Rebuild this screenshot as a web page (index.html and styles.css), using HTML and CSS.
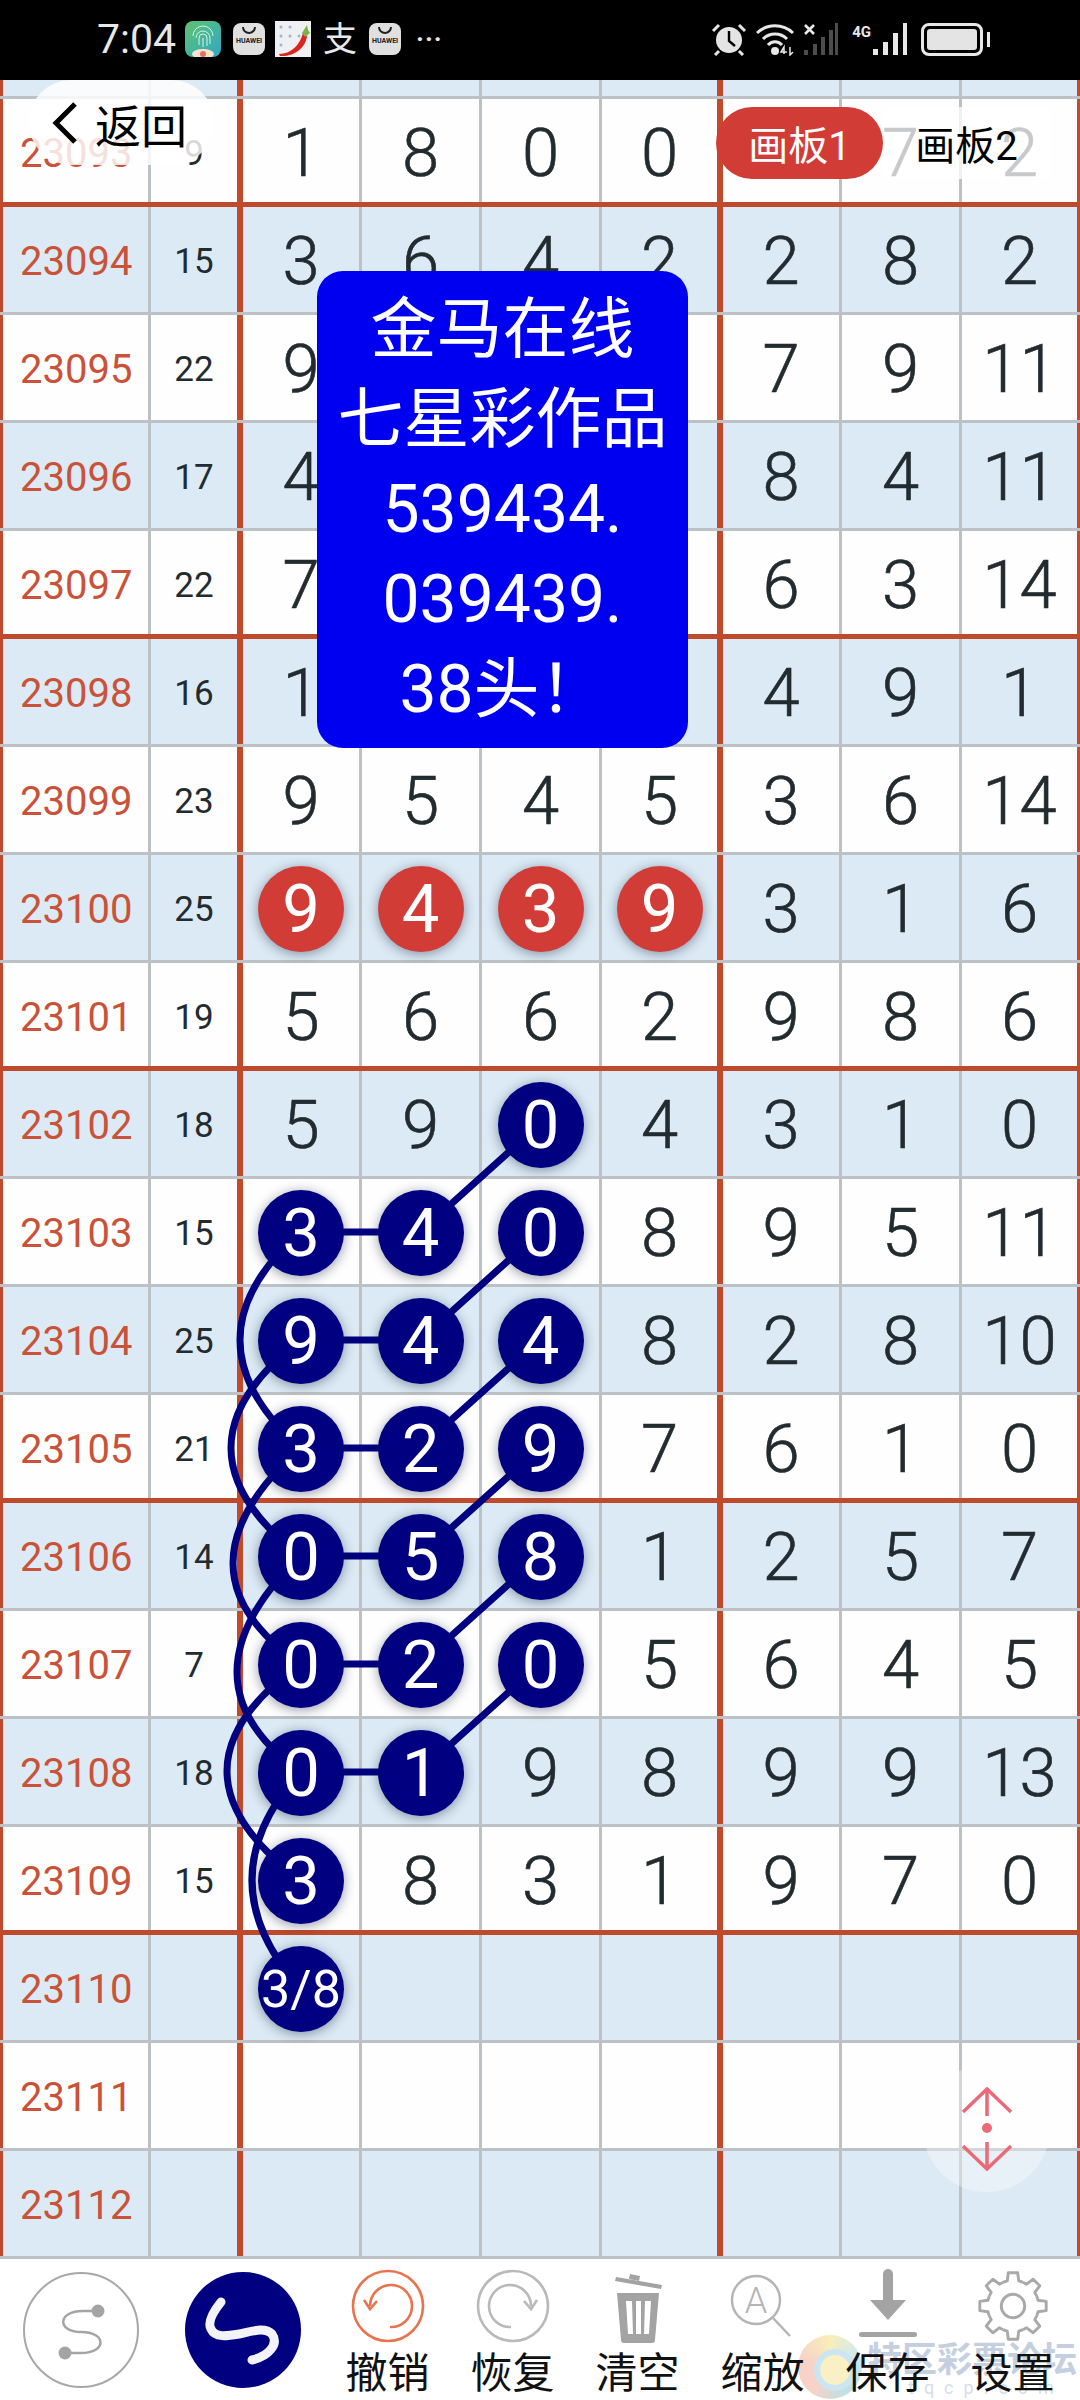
FILE: index.html
```html
<!DOCTYPE html>
<html lang="zh-CN">
<head>
    <meta charset="UTF-8">
    <meta name="viewport" content="width=device-width, initial-scale=1.0">
    <title>七星彩</title>
    <link rel="stylesheet" href="styles.css">
</head>
<body>
    <div class="status">
        <span class="time">7:04</span>
        <span class="app app-finger">
            <svg viewBox="0 0 36 36" width="36" height="36"><g fill="none" stroke="#d9f3e6" stroke-width="1"><path d="M11 17a7 7 0 0 1 14 0v6"/><path d="M14 24v-7a4 4 0 0 1 8 0v8"/><path d="M18 17v9"/><path d="M8 15a10 10 0 0 1 20 0"/></g><ellipse cx="18" cy="33" rx="11" ry="5" fill="#f6e2cf"/><circle cx="18" cy="33" r="3" fill="#e8705a"/></svg>
        </span>
        <span class="app app-huawei"><i class="smile"></i><b>HUAWEI</b></span>
        <span class="app app-chili">
            <svg viewBox="0 0 36 36" width="36" height="36"><rect width="36" height="36" fill="#eef0f4"/><g fill="#9fb2d0"><circle cx="6" cy="6" r="1.5"/><circle cx="15" cy="6" r="1.5"/><circle cx="6" cy="15" r="1.5"/><circle cx="15" cy="15" r="1.5"/><circle cx="24" cy="15" r="1.5"/><circle cx="6" cy="24" r="1.5"/></g><path d="M4 33C16 33 25 24 28 12l4 3C31 26 20 36 5 35z" fill="#d8261c"/><path d="M27 12l5-8 1 5 2 3-5 4z" fill="#7cb342"/></svg>
        </span>
        <span class="app-text">支</span>
        <span class="app app-huawei"><i class="smile"></i><b>HUAWEI</b></span>
        <span class="more">···</span>
        <span class="status-right">
            <svg class="ic-alarm" viewBox="0 0 36 34" width="36" height="34"><circle cx="18" cy="18" r="13" fill="#e4e4e4"/><path d="M18 9v10l6 5" fill="none" stroke="#000" stroke-width="2.4"/><path d="M2 9l6-6M34 9l-6-6M8 29l-4 4M28 29l4 4" stroke="#e4e4e4" stroke-width="3"/></svg>
            <svg class="ic-wifi" viewBox="0 0 40 34" width="40" height="34"><g fill="none" stroke="#e8e8e8" stroke-width="3"><path d="M1 11a26 26 0 0 1 36 0"/><path d="M7 17a17 17 0 0 1 24 0"/><path d="M12 23a9 9 0 0 1 14 0"/></g><circle cx="19" cy="29" r="4" fill="#e8e8e8"/><path d="M28 32v-7l-3 5h6M34 25v8l3-3" fill="none" stroke="#e8e8e8" stroke-width="1.5"/></svg>
            <svg class="ic-sig" viewBox="0 0 36 34" width="36" height="34"><path d="M2 3l9 9M11 3l-9 9" stroke="#e8e8e8" stroke-width="2.6"/><g fill="#4d4d4d"><rect x="1" y="28" width="4" height="5"/><rect x="10" y="22" width="4" height="11"/><rect x="18" y="15" width="4" height="18"/><rect x="26" y="8" width="4" height="25"/><rect x="32" y="1" width="3" height="32"/></g></svg>
            <span class="sig-label">4G</span>
            <svg class="ic-sig2" viewBox="0 0 36 34" width="36" height="34"><g fill="#e8e8e8"><rect x="1" y="27" width="5" height="6"/><rect x="11" y="20" width="5" height="13"/><rect x="21" y="11" width="5" height="22"/><rect x="31" y="1" width="4" height="32"/></g></svg>
            <span class="battery"><i></i></span>
        </span>
    </div>

    <div class="board">
        <div class="row row-cut"><div class="cell cell-id"></div><div class="cell cell-sum"></div><div class="cell"></div><div class="cell"></div><div class="cell"></div><div class="cell cell-end"></div><div class="cell"></div><div class="cell"></div><div class="cell"></div></div>
        <div class="row major"><div class="cell cell-id">23093</div><div class="cell cell-sum">9</div><div class="cell">1</div><div class="cell">8</div><div class="cell">0</div><div class="cell cell-end">0</div><div class="cell"></div><div class="cell">7</div><div class="cell">2</div></div>
        <div class="row alt"><div class="cell cell-id">23094</div><div class="cell cell-sum">15</div><div class="cell">3</div><div class="cell">6</div><div class="cell">4</div><div class="cell cell-end">2</div><div class="cell">2</div><div class="cell">8</div><div class="cell">2</div></div>
        <div class="row"><div class="cell cell-id">23095</div><div class="cell cell-sum">22</div><div class="cell">9</div><div class="cell"></div><div class="cell"></div><div class="cell cell-end"></div><div class="cell">7</div><div class="cell">9</div><div class="cell">11</div></div>
        <div class="row alt"><div class="cell cell-id">23096</div><div class="cell cell-sum">17</div><div class="cell">4</div><div class="cell"></div><div class="cell"></div><div class="cell cell-end"></div><div class="cell">8</div><div class="cell">4</div><div class="cell">11</div></div>
        <div class="row major"><div class="cell cell-id">23097</div><div class="cell cell-sum">22</div><div class="cell">7</div><div class="cell"></div><div class="cell"></div><div class="cell cell-end"></div><div class="cell">6</div><div class="cell">3</div><div class="cell">14</div></div>
        <div class="row alt"><div class="cell cell-id">23098</div><div class="cell cell-sum">16</div><div class="cell">1</div><div class="cell"></div><div class="cell"></div><div class="cell cell-end"></div><div class="cell">4</div><div class="cell">9</div><div class="cell">1</div></div>
        <div class="row"><div class="cell cell-id">23099</div><div class="cell cell-sum">23</div><div class="cell">9</div><div class="cell">5</div><div class="cell">4</div><div class="cell cell-end">5</div><div class="cell">3</div><div class="cell">6</div><div class="cell">14</div></div>
        <div class="row alt"><div class="cell cell-id">23100</div><div class="cell cell-sum">25</div><div class="cell"><span class="dot dot-red">9</span></div><div class="cell"><span class="dot dot-red">4</span></div><div class="cell"><span class="dot dot-red">3</span></div><div class="cell cell-end"><span class="dot dot-red">9</span></div><div class="cell">3</div><div class="cell">1</div><div class="cell">6</div></div>
        <div class="row major"><div class="cell cell-id">23101</div><div class="cell cell-sum">19</div><div class="cell">5</div><div class="cell">6</div><div class="cell">6</div><div class="cell cell-end">2</div><div class="cell">9</div><div class="cell">8</div><div class="cell">6</div></div>
        <div class="row alt"><div class="cell cell-id">23102</div><div class="cell cell-sum">18</div><div class="cell">5</div><div class="cell">9</div><div class="cell"><span class="dot">0</span></div><div class="cell cell-end">4</div><div class="cell">3</div><div class="cell">1</div><div class="cell">0</div></div>
        <div class="row"><div class="cell cell-id">23103</div><div class="cell cell-sum">15</div><div class="cell"><span class="dot">3</span></div><div class="cell"><span class="dot">4</span></div><div class="cell"><span class="dot">0</span></div><div class="cell cell-end">8</div><div class="cell">9</div><div class="cell">5</div><div class="cell">11</div></div>
        <div class="row alt"><div class="cell cell-id">23104</div><div class="cell cell-sum">25</div><div class="cell"><span class="dot">9</span></div><div class="cell"><span class="dot">4</span></div><div class="cell"><span class="dot">4</span></div><div class="cell cell-end">8</div><div class="cell">2</div><div class="cell">8</div><div class="cell">10</div></div>
        <div class="row major"><div class="cell cell-id">23105</div><div class="cell cell-sum">21</div><div class="cell"><span class="dot">3</span></div><div class="cell"><span class="dot">2</span></div><div class="cell"><span class="dot">9</span></div><div class="cell cell-end">7</div><div class="cell">6</div><div class="cell">1</div><div class="cell">0</div></div>
        <div class="row alt"><div class="cell cell-id">23106</div><div class="cell cell-sum">14</div><div class="cell"><span class="dot">0</span></div><div class="cell"><span class="dot">5</span></div><div class="cell"><span class="dot">8</span></div><div class="cell cell-end">1</div><div class="cell">2</div><div class="cell">5</div><div class="cell">7</div></div>
        <div class="row"><div class="cell cell-id">23107</div><div class="cell cell-sum">7</div><div class="cell"><span class="dot">0</span></div><div class="cell"><span class="dot">2</span></div><div class="cell"><span class="dot">0</span></div><div class="cell cell-end">5</div><div class="cell">6</div><div class="cell">4</div><div class="cell">5</div></div>
        <div class="row alt"><div class="cell cell-id">23108</div><div class="cell cell-sum">18</div><div class="cell"><span class="dot">0</span></div><div class="cell"><span class="dot">1</span></div><div class="cell">9</div><div class="cell cell-end">8</div><div class="cell">9</div><div class="cell">9</div><div class="cell">13</div></div>
        <div class="row major"><div class="cell cell-id">23109</div><div class="cell cell-sum">15</div><div class="cell"><span class="dot">3</span></div><div class="cell">8</div><div class="cell">3</div><div class="cell cell-end">1</div><div class="cell">9</div><div class="cell">7</div><div class="cell">0</div></div>
        <div class="row alt"><div class="cell cell-id">23110</div><div class="cell cell-sum"></div><div class="cell"><span class="dot dot-small">3/8</span></div><div class="cell"></div><div class="cell"></div><div class="cell cell-end"></div><div class="cell"></div><div class="cell"></div><div class="cell"></div></div>
        <div class="row"><div class="cell cell-id">23111</div><div class="cell cell-sum"></div><div class="cell"></div><div class="cell"></div><div class="cell"></div><div class="cell cell-end"></div><div class="cell"></div><div class="cell"></div><div class="cell"></div></div>
        <div class="row alt"><div class="cell cell-id">23112</div><div class="cell cell-sum"></div><div class="cell"></div><div class="cell"></div><div class="cell"></div><div class="cell cell-end"></div><div class="cell"></div><div class="cell"></div><div class="cell"></div></div>

        <!-- connecting strokes, in page coordinates -->
        <svg class="links" viewBox="0 80 1080 2179" width="1080" height="2179">
            <g fill="none" stroke="#000080" stroke-width="7">
                <path d="M540 1124L420 1232H300Q180 1340 300 1448H420L540 1340"/>
                <path d="M540 1232L420 1340H300Q162 1448 300 1556H420L540 1448"/>
                <path d="M300 1448Q166 1570 300 1664H420L540 1556"/>
                <path d="M300 1556Q174 1680 300 1772H420L540 1664"/>
                <path d="M300 1664Q154 1770 300 1880"/>
                <path d="M300 1772Q204 1880 300 1988"/>
            </g>
        </svg>

        <a class="back">
            <svg viewBox="0 0 26 42" width="26" height="42"><path d="M23 2L4 21l19 19" fill="none" stroke="#000" stroke-width="5"/></svg>
            返回
        </a>

        <div class="tabs">
            <span class="tab tab-on">画板1</span>
            <span class="tab">画板2</span>
        </div>

        <div class="note">
            <p>金马在线</p>
            <p>七星彩作品</p>
            <p>539434.</p>
            <p>039439.</p>
            <p>38头！</p>
        </div>

        <div class="scroller">
            <svg viewBox="0 0 52 84" width="52" height="84"><g fill="none" stroke="#ea6a78" stroke-width="3.5"><path d="M2 25L26 2l24 23M26 2v27"/><path d="M2 59l24 23 24-23M26 82V55"/></g><circle cx="26" cy="41" r="5" fill="#ea6a78"/></svg>
        </div>
    </div>

    <div class="toolbar">
        <div class="mark">
            <span class="swirl"></span>
            <span class="mark-text">特区彩票论坛</span>
            <span class="mark-url">tqcp.com</span>
        </div>
        <span class="round round-line">
            <svg viewBox="0 0 116 116" width="116" height="116"><path d="M75 39H60C34 39 34 60 58 60C84 60 84 81 58 81H42" fill="none" stroke="#a4a4a4" stroke-width="2.5"/><circle cx="75" cy="39" r="6.5" fill="#a4a4a4"/><circle cx="42" cy="81" r="6.5" fill="#a4a4a4"/></svg>
        </span>
        <span class="round round-on">
            <svg viewBox="0 0 116 116" width="116" height="116"><path d="M36 30C28 40 22 50 26 57C30 66 42 64 54 62C68 59 80 55 87 62C94 72 84 84 67 88" fill="none" stroke="#f2f4fa" stroke-width="9" stroke-linecap="round"/></svg>
        </span>
        <div class="tools">
            <div class="tool">
                <svg viewBox="0 0 76 76" width="76" height="76"><g fill="none" stroke="#e8734c" stroke-width="2.6"><circle cx="38" cy="38" r="35"/><path d="M20 38a21 21 0 1 1 20 21"/><path d="M14 32l6 9 7-8"/></g></svg>
                <span>撤销</span>
            </div>
            <div class="tool">
                <svg viewBox="0 0 76 76" width="76" height="76"><g fill="none" stroke="#b9b9b9" stroke-width="2.6"><circle cx="38" cy="38" r="35"/><path d="M56 38a21 21 0 1 0-20 21"/><path d="M62 32l-6 9-7-8"/></g></svg>
                <span>恢复</span>
            </div>
            <div class="tool">
                <svg viewBox="0 0 76 76" width="76" height="76"><g fill="#a3a3a3"><path d="M16 9l46 8-1 4-46-8z"/><path d="M30 6l10 2-1 5-10-2z"/><path d="M17 25h42l-4 47a3 3 0 0 1-3 3H24a3 3 0 0 1-3-3zM26 33l2 33h5l-1-33zM36 33v33h5V33zM45 33l-1 33h5l2-33z" fill-rule="evenodd"/></g></svg>
                <span>清空</span>
            </div>
            <div class="tool">
                <svg viewBox="0 0 76 76" width="76" height="76"><circle cx="31" cy="32" r="24" fill="none" stroke="#b4b4b4" stroke-width="2.4"/><path d="M48 50l17 18" stroke="#b4b4b4" stroke-width="2.4"/><text x="31" y="45" text-anchor="middle" class="lens-a">A</text></svg>
                <span>缩放</span>
            </div>
            <div class="tool">
                <svg viewBox="0 0 76 76" width="76" height="76"><path d="M38 6v30" stroke="#a3a3a3" stroke-width="10" stroke-linecap="round"/><path d="M20 32h36L38 52z" fill="#a3a3a3"/><rect x="9" y="64" width="58" height="5" rx="2.5" fill="#a3a3a3"/></svg>
                <span>保存</span>
            </div>
            <div class="tool">
                <svg viewBox="-34 -34 68 68" width="76" height="76">
                    <defs><path id="tooth" d="M-8.8 -21.25L-5.17 -22.4L-4.18 -29.7H4.18L5.17 -22.4L8.8 -21.25"/></defs>
                    <g fill="none" stroke="#a9a9a9" stroke-width="2.6" stroke-linejoin="round">
                        <use href="#tooth"/><use href="#tooth" transform="rotate(45)"/><use href="#tooth" transform="rotate(90)"/><use href="#tooth" transform="rotate(135)"/><use href="#tooth" transform="rotate(180)"/><use href="#tooth" transform="rotate(225)"/><use href="#tooth" transform="rotate(270)"/><use href="#tooth" transform="rotate(315)"/>
                        <circle r="10.5"/>
                    </g>
                </svg>
                <span>设置</span>
            </div>
        </div>
    </div>
</body>
</html>
```

FILE: styles.css
```css
* {
    box-sizing: border-box;
}

body {
    margin: 0;
    width: 1080px;
    height: 2400px;
    overflow: hidden;
    background-color: #fff;
    font-family: Roboto, "Noto Sans CJK SC", sans-serif;
    display: flex;
    flex-direction: column;
}

/* status bar */
.status {
    height: 80px;
    flex: none;
    background-color: #000;
    color: #e8e8e8;
    display: flex;
    align-items: center;
    padding: 0 97px 2px 97px;
}

.time {
    font-size: 41px;
    margin-right: 9px;
}

.app {
    width: 36px;
    height: 36px;
    margin-right: 12px;
    border-radius: 8px;
    overflow: hidden;
    flex: none;
}

.app svg {
    display: block;
}

.app-finger {
    background: linear-gradient(135deg, #5fc46e, #2ea7c8);
}

.app-huawei {
    width: 32px;
    height: 32px;
    background-color: #e0e0e0;
    color: #222;
    display: flex;
    flex-direction: column;
    align-items: center;
    margin-right: 10px;
}

.app-huawei b {
    font-size: 7px;
    line-height: 9px;
    margin-top: 3px;
}

.smile {
    width: 14px;
    height: 7px;
    margin-top: 4px;
    border: 2px solid #222;
    border-top: none;
    border-radius: 0 0 8px 8px;
}

.app-chili {
    border-radius: 0;
}

.app-text {
    font-size: 34px;
    line-height: 36px;
    width: 34px;
    margin-right: 12px;
}

.more {
    font-size: 26px;
    font-weight: 700;
    letter-spacing: 1px;
    margin-left: 5px;
}

.status-right {
    margin-left: auto;
    display: flex;
    align-items: center;
    gap: 9px;
}

.sig-label {
    font-size: 15px;
    font-weight: 700;
    align-self: flex-start;
    margin: 0 -8px 0 4px;
    line-height: 20px;
}

.ic-sig {
    margin-left: -2px;
}

.battery {
    width: 62px;
    height: 33px;
    border: 3px solid #e8e8e8;
    border-radius: 8px;
    padding: 3px;
    margin-left: 4px;
    position: relative;
}

.battery i {
    display: block;
    height: 100%;
    background-color: #e4e4e4;
    border-radius: 3px;
}

.battery::after {
    content: "";
    position: absolute;
    right: -10px;
    top: 6px;
    width: 3px;
    height: 15px;
    background-color: #e8e8e8;
}

/* lottery table */
.board {
    position: relative;
    height: 2179px;
    flex: none;
    overflow: hidden;
}

.row {
    position: relative;
    height: 108px;
    display: grid;
    grid-template-columns: 151px 92px 119px 120px 120px 121px 119px 120px 118px;
    background-color: #fefefe;
}

.row::after {
    content: "";
    position: absolute;
    left: 0;
    right: 0;
    bottom: 0;
    height: 3px;
    background-color: #bcc1c5;
}

.row.alt {
    background-color: #dceaf5;
}

.row-cut {
    height: 19px;
    background-color: #dceaf5;
}

.row.major::after {
    height: 5px;
    background-color: #c04a2c;
}

.cell {
    border-right: 3px solid #bcc1c5;
    display: flex;
    align-items: center;
    justify-content: center;
    font-size: 67px;
    font-weight: 300;
    -webkit-text-stroke: 0.6px #222b30;
    color: #222b30;
}

.cell-id {
    justify-content: flex-start;
    padding-left: 17px;
    font-size: 40px;
    font-weight: 400;
    -webkit-text-stroke: 0;
    color: #c95238;
    border-left: 3px solid #c04a2c;
}

.cell-sum {
    font-size: 35px;
    font-weight: 400;
    -webkit-text-stroke: 0;
    border-right: 6px solid #c04a2c;
}

.cell-end {
    border-right: 6px solid #c04a2c;
}

.cell:last-child {
    border-right-color: #c04a2c;
}

.dot {
    position: relative;
    z-index: 2;
    width: 86px;
    height: 86px;
    border-radius: 50%;
    background-color: #000080;
    color: #fff;
    font-weight: 400;
    -webkit-text-stroke: 0;
    display: flex;
    align-items: center;
    justify-content: center;
    box-shadow: 0 2px 12px rgba(20, 30, 60, 0.45);
}

.dot-red {
    background-color: #d13c36;
}

.dot-small {
    font-size: 52px;
}

.links {
    position: absolute;
    left: 0;
    top: 0;
    z-index: 1;
}

/* things floating over the table */
.back {
    position: absolute;
    z-index: 3;
    left: 29px;
    top: 0;
    width: 185px;
    height: 85px;
    border-radius: 42px;
    background-color: rgba(255, 255, 255, 0.82);
    color: #000;
    font-size: 46px;
    display: flex;
    align-items: center;
    gap: 17px;
    padding-left: 23px;
}

.tabs {
    position: absolute;
    z-index: 3;
    left: 716px;
    top: 27px;
    display: flex;
}

.tab {
    width: 167px;
    height: 72px;
    font-size: 40px;
    color: #000;
    display: flex;
    align-items: center;
    justify-content: center;
    background-color: rgba(255, 255, 255, 0.75);
}

.tab-on {
    background-color: #d13c36;
    color: #fff;
    border-radius: 36px;
}

.note {
    position: absolute;
    z-index: 3;
    left: 317px;
    top: 191px;
    width: 371px;
    height: 477px;
    padding: 14px 0;
    border-radius: 26px;
    background-color: #0000f0;
    color: #fff;
    font-size: 66px;
    line-height: 90px;
    text-align: center;
}

.note p {
    margin: 0;
}

.scroller {
    position: absolute;
    z-index: 3;
    left: 923px;
    top: 1985px;
    width: 127px;
    height: 127px;
    border-radius: 50%;
    background-color: rgba(255, 255, 255, 0.35);
    display: flex;
    align-items: center;
    justify-content: center;
}

/* bottom tools */
.toolbar {
    position: relative;
    flex: 1;
    display: flex;
    align-items: flex-start;
    padding-left: 23px;
}

.round {
    width: 116px;
    height: 116px;
    margin-top: 13px;
    border-radius: 50%;
    flex: none;
    position: relative;
}

.round svg {
    display: block;
}

.round-line {
    border: 2.5px solid #a8a8a8;
}

.round-line svg {
    margin: -2.5px;
}

.round-on {
    background-color: #000080;
    margin-left: 46px;
}

.tools {
    position: relative;
    display: flex;
    margin-left: 24px;
}

.tool {
    width: 125px;
    padding-top: 9px;
    display: flex;
    flex-direction: column;
    align-items: center;
    font-size: 42px;
    line-height: 48px;
    color: #111;
}

.tool svg {
    display: block;
    margin-bottom: 6px;
}

.lens-a {
    font-family: Roboto, sans-serif;
    font-size: 36px;
    font-weight: 300;
    fill: #b4b4b4;
}

.mark {
    position: absolute;
    left: 798px;
    top: 76px;
    width: 282px;
    height: 64px;
    opacity: 0.6;
}

.swirl {
    position: absolute;
    left: 0;
    top: 0;
    width: 64px;
    height: 64px;
    border-radius: 50%;
    background: conic-gradient(#f6e48e, #a9dcef, #8ecfd6, #f2b7a2, #f2b7a2, #f6e48e);
}

.swirl::after {
    content: "";
    position: absolute;
    left: 16px;
    top: 14px;
    width: 30px;
    height: 30px;
    border-radius: 50%;
    border: 6px solid #a9d4ec;
    background-color: #f8e7a0;
}

.mark-text {
    position: absolute;
    left: 69px;
    top: 6px;
    font-size: 35px;
    line-height: 40px;
    font-weight: 700;
    white-space: nowrap;
    color: #9db2cc;
}

.mark-url {
    position: absolute;
    left: 110px;
    top: 42px;
    font-size: 18px;
    letter-spacing: 10px;
    color: #b9c9da;
}
```
